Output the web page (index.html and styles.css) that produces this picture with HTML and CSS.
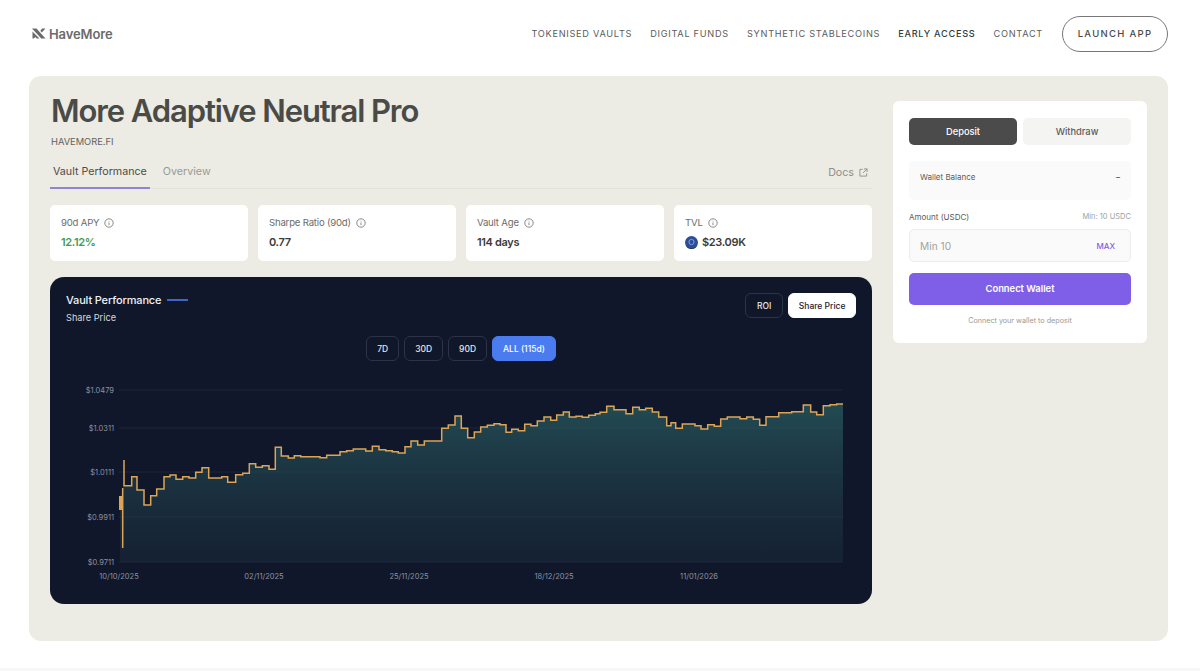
FILE: index.html
```html
<!DOCTYPE html>
<html lang="en">

<head>
    <meta charset="UTF-8">
    <meta name="viewport" content="width=device-width, initial-scale=1.0">
    <title>More Adaptive Neutral Pro</title>
    <link rel="stylesheet" href="styles.css">
</head>

<body>

    <!-- HEADER -->
    <header class="header">
        <a class="logo">
            <svg class="logo-icon" viewBox="0 0 14 11" width="14" height="11">
                <path d="M0 0.5H4.5L13.5 10.5H9.2Z" fill="#6b6b6b" />
                <path d="M13.5 0.5L9.8 4.4L8.3 2.8L10.2 0.5Z" fill="#6b6b6b" />
                <path d="M0.5 3.5L7.5 10.5H4.8L3.3 9L1.8 10.5H0.5Z" fill="#6b6b6b" />
            </svg>
            <span>HaveMore</span>
        </a>
        <nav class="nav">
            <a>TOKENISED VAULTS</a>
            <a>DIGITAL FUNDS</a>
            <a>SYNTHETIC STABLECOINS</a>
            <a class="nav-dark">EARLY ACCESS</a>
            <a>CONTACT</a>
            <button class="launch">LAUNCH APP</button>
        </nav>
    </header>

    <main class="panel">
        <section class="left">
            <h1>More Adaptive Neutral Pro</h1>
            <p class="source">HAVEMORE.FI</p>

            <!-- TABS -->
            <div class="tabs">
                <a class="tab tab-active">Vault Performance</a>
                <a class="tab">Overview</a>
                <a class="docs">Docs
                    <svg viewBox="0 0 10 10" width="9" height="9" fill="none" stroke="#8f8f8a" stroke-width="1">
                        <path d="M4 1.5H1V9H8.5V6" />
                        <path d="M5.5 1H9V4.5M9 1L4.5 5.5" />
                    </svg>
                </a>
            </div>

            <!-- STATS -->
            <div class="stats">
                <div class="stat">
                    <div class="stat-label">90d APY
                        <svg class="info" viewBox="0 0 10 10"><circle cx="5" cy="5" r="4.2" /><path d="M5 4.5V7.2M5 2.8V3.5" /></svg>
                    </div>
                    <div class="stat-value green">12.12%</div>
                </div>
                <div class="stat">
                    <div class="stat-label">Sharpe Ratio (90d)
                        <svg class="info" viewBox="0 0 10 10"><circle cx="5" cy="5" r="4.2" /><path d="M5 4.5V7.2M5 2.8V3.5" /></svg>
                    </div>
                    <div class="stat-value">0.77</div>
                </div>
                <div class="stat">
                    <div class="stat-label">Vault Age
                        <svg class="info" viewBox="0 0 10 10"><circle cx="5" cy="5" r="4.2" /><path d="M5 4.5V7.2M5 2.8V3.5" /></svg>
                    </div>
                    <div class="stat-value">114 days</div>
                </div>
                <div class="stat">
                    <div class="stat-label">TVL
                        <svg class="info" viewBox="0 0 10 10"><circle cx="5" cy="5" r="4.2" /><path d="M5 4.5V7.2M5 2.8V3.5" /></svg>
                    </div>
                    <div class="stat-value">
                        <svg class="token" viewBox="0 0 13 13" width="13" height="13">
                            <circle cx="6.5" cy="6.5" r="6.5" fill="#2b4f97" />
                            <path d="M0.6 9.2A6.5 6.5 0 0 0 12.4 9.2A7 7 0 0 1 0.6 9.2Z" fill="#10192f" />
                            <circle cx="6.5" cy="6" r="2.6" fill="none" stroke="#7f9fe0" stroke-width="1" />
                        </svg>
                        $23.09K
                    </div>
                </div>
            </div>

            <!-- CHART -->
            <div class="chart">
                <div class="chart-top">
                    <div>
                        <div class="chart-title">Vault Performance <span class="chart-key"></span></div>
                        <div class="chart-sub">Share Price</div>
                    </div>
                    <div class="toggle">
                        <button class="btn btn-roi">ROI</button>
                        <button class="btn btn-white">Share Price</button>
                    </div>
                </div>
                <div class="ranges">
                    <button class="btn btn-range">7D</button>
                    <button class="btn btn-range">30D</button>
                    <button class="btn btn-range">90D</button>
                    <button class="btn btn-range btn-blue">ALL (115d)</button>
                </div>
                <svg class="plot" viewBox="50 375 822 215" width="822" height="215">
                    <defs>
                        <linearGradient id="area" x1="0" y1="0" x2="0" y2="1">
                            <stop offset="0" stop-color="#2a5f62" stop-opacity="0.72" />
                            <stop offset="1" stop-color="#20384a" stop-opacity="0.3" />
                        </linearGradient>
                    </defs>

                    <path class="grid" d="M119 390H843M119 428H843M119 472H843M119 517H843M119 562H843" />

                    <path fill="url(#area)" d="M120 562V500L122.7 488L124 485.7H131.7V476.7H137V490H144V505H150.7V495.7H156.7V489H164V476.7H170V475H176V479.3H182.7V476.7H189V478H195.7V472.3H202V467.7H208.7V478H221.7V476.7H227.7V482.3H235.7V474.7H242.7V473.3H249.3V463.7H255.7V467.3H262.3V465.7H269V469.3H275.3V447.3H281.3V456H288.3V458H294.3V455.7H300.7V456.7H320V457.7H326.7V455.3H340V451.7H346.7V450.7H353.3V449H365.7V451H372.3V446.3H379V449.7H385.7V450.7H392.3V451.7H398.3V453H405V446.7H411V441H417.7V445H424.3V441H441.7V428.3H448.3V425H455V416H461.3V428.3H467.7V437.7H474.3V432H480.7V427H487.3V425.3H494V423.7H500V424.7H506V432.3H511.7V429.3H518.3V430.7H524.7V424.3H531V425.7H537.3V421H544V417H550.7V420.3H556.7V415H563.3V412H569.3V417H576V416.3H582.3V417.3H588.7V415.3H595.3V413.7H600V412.3H606.7V406.3H614V409.7H626V413.7H632.7V407.3H639.3V409.7H645.7V408.3H652.3V412H658.7V417H666.7V425.7H671V422.7H675.7V428.3H682.3V424H695V425.7H701V429H707.7V424.7H714.3V426.3H720.7V419H727.3V417H740V418.7H746.7V417H753.3V419.3H759.7V425.3H766V416.7H778.7V412.7H791.7V411.7H803.3V405H810.7V412H816.7V414.7H823.3V405.7H830V404.7H836.7V404H843V562Z" />

                    <path class="line line-blob" d="M120.5 496V510" />
                    <path class="line" d="M122.7 488V548M124 460V485.7H131.7V476.7H137V490H144V505H150.7V495.7H156.7V489H164V476.7H170V475H176V479.3H182.7V476.7H189V478H195.7V472.3H202V467.7H208.7V478H221.7V476.7H227.7V482.3H235.7V474.7H242.7V473.3H249.3V463.7H255.7V467.3H262.3V465.7H269V469.3H275.3V447.3H281.3V456H288.3V458H294.3V455.7H300.7V456.7H320V457.7H326.7V455.3H340V451.7H346.7V450.7H353.3V449H365.7V451H372.3V446.3H379V449.7H385.7V450.7H392.3V451.7H398.3V453H405V446.7H411V441H417.7V445H424.3V441H441.7V428.3H448.3V425H455V416H461.3V428.3H467.7V437.7H474.3V432H480.7V427H487.3V425.3H494V423.7H500V424.7H506V432.3H511.7V429.3H518.3V430.7H524.7V424.3H531V425.7H537.3V421H544V417H550.7V420.3H556.7V415H563.3V412H569.3V417H576V416.3H582.3V417.3H588.7V415.3H595.3V413.7H600V412.3H606.7V406.3H614V409.7H626V413.7H632.7V407.3H639.3V409.7H645.7V408.3H652.3V412H658.7V417H666.7V425.7H671V422.7H675.7V428.3H682.3V424H695V425.7H701V429H707.7V424.7H714.3V426.3H720.7V419H727.3V417H740V418.7H746.7V417H753.3V419.3H759.7V425.3H766V416.7H778.7V412.7H791.7V411.7H803.3V405H810.7V412H816.7V414.7H823.3V405.7H830V404.7H836.7V404H843" />

                    <text class="axis" x="114" y="393" text-anchor="end">$1.0479</text>
                    <text class="axis" x="114" y="431" text-anchor="end">$1.0311</text>
                    <text class="axis" x="114" y="475" text-anchor="end">$1.0111</text>
                    <text class="axis" x="114" y="520" text-anchor="end">$0.9911</text>
                    <text class="axis" x="114" y="565" text-anchor="end">$0.9711</text>

                    <text class="axis" x="119" y="579" text-anchor="middle">10/10/2025</text>
                    <text class="axis" x="264" y="579" text-anchor="middle">02/11/2025</text>
                    <text class="axis" x="409" y="579" text-anchor="middle">25/11/2025</text>
                    <text class="axis" x="554" y="579" text-anchor="middle">18/12/2025</text>
                    <text class="axis" x="699" y="579" text-anchor="middle">11/01/2026</text>
                </svg>
            </div>
        </section>

        <!-- DEPOSIT BOX -->
        <aside class="box">
            <div class="box-tabs">
                <button class="box-tab box-tab-active">Deposit</button>
                <button class="box-tab">Withdraw</button>
            </div>
            <div class="wallet">
                <span>Wallet Balance</span>
                <span class="wallet-value">–</span>
            </div>
            <div class="amount-row">
                <span>Amount (USDC)</span>
                <span class="amount-min">Min: 10 USDC</span>
            </div>
            <div class="input">
                <span>Min 10</span>
                <span class="max">MAX</span>
            </div>
            <button class="connect">Connect Wallet</button>
            <p class="note">Connect your wallet to deposit</p>
        </aside>
    </main>

    <footer class="footer"></footer>

</body>

</html>
```

FILE: styles.css
```css
* {
    box-sizing: border-box;
}

body {
    margin: 0;
    background-color: #ffffff;
    font-family: "Inter", "Liberation Sans", sans-serif;
    color: #3f3f3c;
}

button {
    font-family: inherit;
}

/* header */
.header {
    display: flex;
    justify-content: space-between;
    align-items: center;
    height: 76px;
    padding: 0 32px 9px 32px;
}

.logo {
    display: flex;
    align-items: center;
    gap: 3px;
    font-size: 13px;
    font-weight: 600;
    letter-spacing: -0.1px;
    color: #6b6b6b;
}

.nav {
    display: flex;
    align-items: center;
    gap: 18px;
    font-size: 9.2px;
    letter-spacing: 0.72px;
    color: #5c5c5c;
}

.nav-dark {
    color: #2f3f3f;
    font-weight: 500;
}

.launch {
    width: 106px;
    height: 36px;
    margin-left: 1px;
    background-color: #ffffff;
    border: 1.5px solid #777777;
    border-radius: 18px;
    font-size: 9.5px;
    font-weight: 500;
    letter-spacing: 1.3px;
    color: #4a4a4a;
}

/* main panel */
.panel {
    display: grid;
    grid-template-columns: 822px 254px;
    gap: 21px;
    align-items: start;
    width: 1139px;
    height: 565px;
    margin-left: 29px;
    padding: 16px 21px 0 21px;
    background-color: #ecebe4;
    border-radius: 12px;
}

h1 {
    margin: 0 0 0 1px;
    font-size: 31px;
    line-height: 38px;
    font-weight: 600;
    letter-spacing: -1.1px;
    color: #4a4a46;
}

.source {
    margin: 5px 0 0 1px;
    font-size: 9.3px;
    line-height: 14px;
    color: #62625e;
}

.tabs {
    display: flex;
    align-items: center;
    height: 32px;
    margin-top: 8px;
    border-bottom: 1px solid #e3e2db;
    font-size: 10.7px;
}

.tab {
    display: block;
    height: 32px;
    padding: 8px 3px 0 3px;
    color: #9a9a95;
}

.tab + .tab {
    margin-left: 10px;
}

.tab-active {
    color: #4c4c48;
    border-bottom: 2px solid #9583cf;
}

.docs {
    display: flex;
    align-items: center;
    gap: 5px;
    margin-left: auto;
    margin-right: 4px;
    color: #8f8f8a;
}

/* stats */
.stats {
    display: grid;
    grid-template-columns: repeat(4, 1fr);
    gap: 10px;
    margin-top: 16px;
}

.stat {
    height: 56px;
    padding: 11px 11px 0 11px;
    background-color: #ffffff;
    border-radius: 5px;
}

.stat-label {
    display: flex;
    align-items: center;
    gap: 5px;
    font-size: 9.6px;
    letter-spacing: -0.2px;
    line-height: 13px;
    color: #6c6c68;
}

.stat-value {
    display: flex;
    align-items: center;
    gap: 4px;
    margin-top: 6px;
    font-size: 11px;
    line-height: 14px;
    font-weight: 600;
    letter-spacing: -0.35px;
    color: #3c3c3a;
}

.green {
    color: #3f9a54;
}

.info {
    width: 10px;
    height: 10px;
    fill: none;
    stroke: #6c6c68;
    stroke-width: 0.8;
}

/* chart */
.chart {
    height: 327px;
    margin-top: 16px;
    padding: 16px 16px 0 16px;
    background-color: #10172a;
    border-radius: 14px;
    color: #e6e8ec;
}

.chart-top {
    display: flex;
    justify-content: space-between;
    align-items: flex-start;
}

.chart-title {
    display: flex;
    align-items: center;
    gap: 6px;
    font-size: 11px;
    line-height: 14px;
    font-weight: 500;
    letter-spacing: -0.15px;
    color: #f0f1f4;
}

.chart-key {
    width: 21px;
    height: 1.5px;
    background-color: #3f66c4;
}

.chart-sub {
    margin-top: 4px;
    font-size: 9.2px;
    line-height: 13px;
    color: #d5d8de;
}

.toggle {
    display: flex;
    gap: 5px;
}

.btn {
    height: 25px;
    padding: 0 10.5px;
    background-color: transparent;
    border: 1px solid #2b3345;
    border-radius: 6px;
    font-size: 8.5px;
    font-weight: 500;
    color: #e6e8ec;
}

.btn-roi {
    padding: 0 11px;
}

.btn-white {
    padding: 0 9.5px;
    background-color: #ffffff;
    border-color: #ffffff;
    color: #1c2233;
}

.ranges {
    display: flex;
    justify-content: center;
    gap: 5px;
    margin-top: 12px;
}

.btn-range {
    padding: 0 10px;
}

.btn-blue {
    background-color: #4a7cf0;
    border-color: #4a7cf0;
    color: #ffffff;
}

.plot {
    display: block;
    margin: 14px 0 0 -16px;
}

.grid {
    stroke: #1d2638;
    stroke-width: 1;
    fill: none;
}

.line {
    fill: none;
    stroke: #dca555;
    stroke-width: 1.5;
}

.line-blob {
    stroke-width: 3;
}

.axis {
    font-size: 7.5px;
    fill: #8b92a3;
}

/* deposit box */
.box {
    width: 254px;
    height: 242px;
    margin-top: 9px;
    padding: 17px 16px 0 16px;
    background-color: #ffffff;
    border-radius: 6px;
}

.box-tabs {
    display: flex;
    gap: 6px;
}

.box-tab {
    flex: 1;
    height: 27px;
    padding-bottom: 2px;
    background-color: #f4f4f3;
    border: none;
    border-radius: 5px;
    font-size: 9.3px;
    font-weight: 500;
    color: #5c5c5a;
}

.box-tab-active {
    background-color: #4b4b4b;
    color: #ffffff;
}

.wallet {
    display: flex;
    justify-content: space-between;
    height: 39px;
    margin-top: 16px;
    padding: 11px 11px 0 11px;
    background-color: #fafafa;
    border-radius: 5px;
    font-size: 8px;
    line-height: 11px;
    color: #5a5a58;
}

.wallet-value {
    font-weight: 600;
}

.amount-row {
    display: flex;
    justify-content: space-between;
    align-items: center;
    margin-top: 11px;
    font-size: 8px;
    line-height: 12px;
    color: #5a5a58;
}

.amount-min {
    font-size: 7.5px;
    color: #a0a09c;
}

.input {
    display: flex;
    justify-content: space-between;
    align-items: center;
    height: 33px;
    margin-top: 6px;
    padding: 0 15px 0 10px;
    background-color: #fafafa;
    border: 1px solid #ececea;
    border-radius: 5px;
    font-size: 10.2px;
    color: #a3a3a0;
}

.max {
    font-size: 8px;
    font-weight: 500;
    color: #7f5fe8;
}

.connect {
    display: block;
    width: 100%;
    height: 32px;
    margin-top: 11px;
    padding-bottom: 3px;
    background-color: #7f5fe8;
    border: none;
    border-radius: 5px;
    font-size: 9.4px;
    font-weight: 600;
    color: #ffffff;
}

.note {
    margin: 10px 0 0 0;
    text-align: center;
    font-size: 7.2px;
    line-height: 11px;
    color: #9a9a96;
}

.footer {
    height: 3px;
    margin-top: 27px;
    background-color: #f7f7f7;
}
```
